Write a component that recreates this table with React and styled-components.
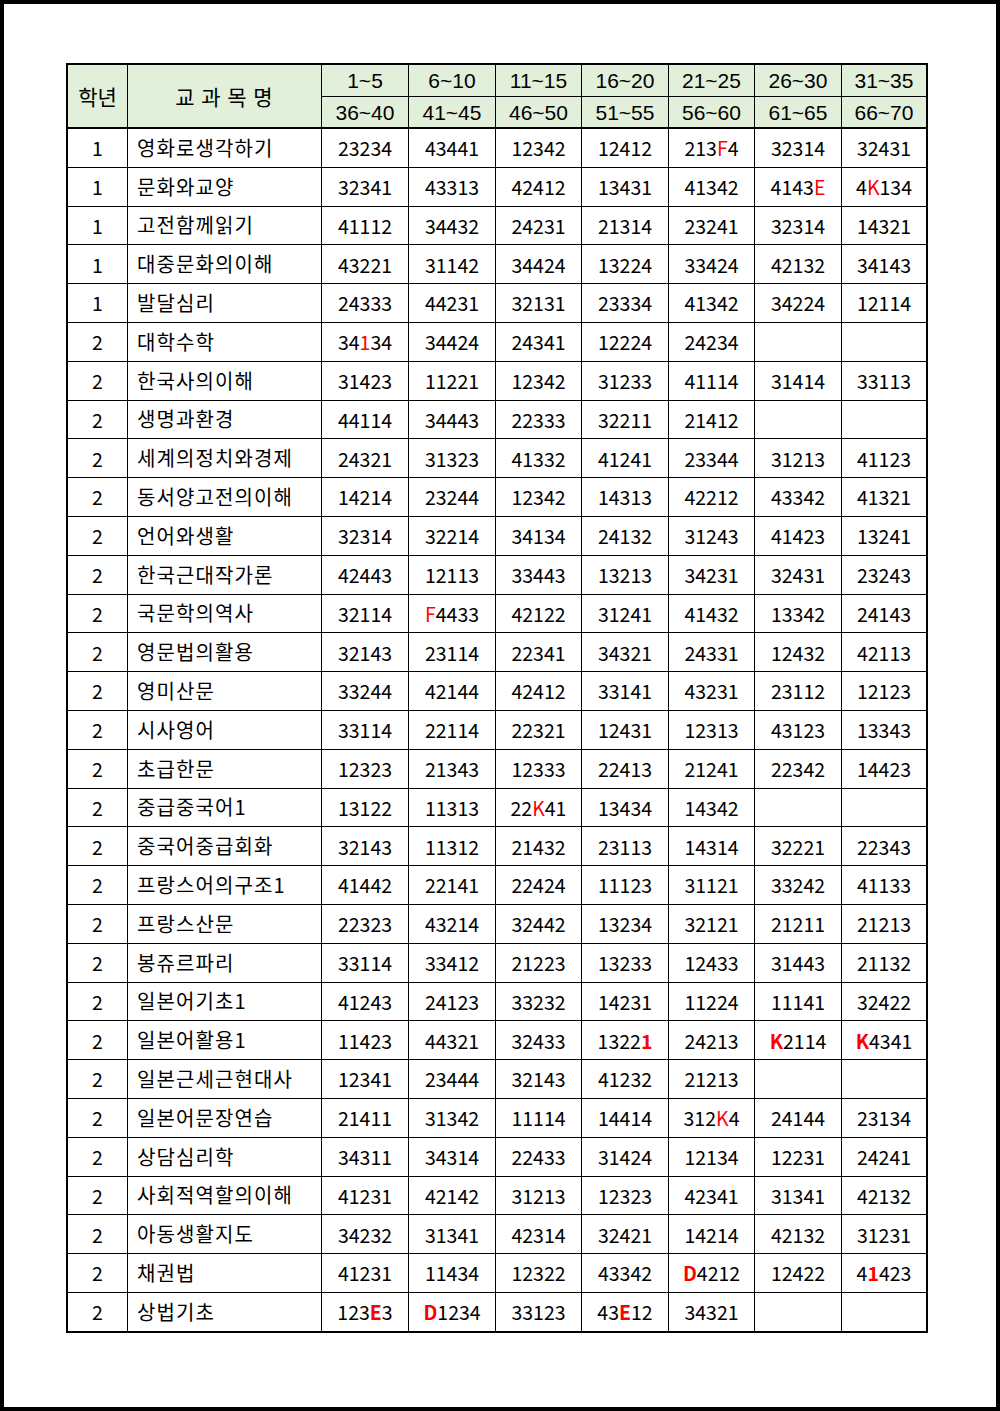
import React from "react";
import styled, { createGlobalStyle } from "styled-components";

const GlobalStyle = createGlobalStyle`
  html, body {
    margin: 0;
    padding: 0;
    background: #ffffff;
  }
  body {
    font-family: "Noto Sans CJK KR", "Noto Sans", sans-serif;
    color: #000;
  }
`;

const Page = styled.div`
  width: 1000px;
  height: 1411px;
  box-sizing: border-box;
  border: 4px solid #000;
  padding: 59px 0 0 62px;
  background: #fff;
`;

const Table = styled.table`
  border-collapse: separate;
  border-spacing: 0;
  table-layout: fixed;
  width: 861px;
  border: 2px solid #000;
`;

const HeadCell = styled.th`
  background: #e2efda;
  font-weight: 400;
  padding: 0;
  height: ${(p) => p.$h}px;
  border-right: ${(p) => (p.$last ? "none" : "1px solid #000")};
  border-bottom: ${(p) => (p.$thick ? "2px" : "1px")} solid #000;
  font-family: ${(p) =>
    p.$range ? '"Liberation Sans", Arial, sans-serif' : '"Noto Sans CJK KR", sans-serif'};
  font-size: ${(p) => (p.$range ? "21px" : "21px")};
  line-height: 1;
  text-align: center;
  vertical-align: middle;
  letter-spacing: ${(p) => (p.$wide ? "1px" : "0")};
`;

const Cell = styled.td`
  padding: ${(p) => (p.$name ? "0 0 0 9px" : "0")};
  height: 37.8px;
  border-right: ${(p) => (p.$last ? "none" : "1px solid #000")};
  border-bottom: ${(p) => (p.$bottom ? "none" : "1px solid #000")};
  font-size: ${(p) => (p.$name ? "20px" : "19.5px")};
  letter-spacing: ${(p) => (p.$name ? "1.1px" : "0")};
  line-height: 1.2;
  text-align: ${(p) => (p.$name ? "left" : "center")};
  vertical-align: middle;
  white-space: nowrap;
  overflow: hidden;
`;

const Mark = styled.span`
  color: #ff0000;
  font-weight: ${(p) => (p.$bold ? 700 : 400)};
`;

const widths = [60, 194, 87, 87, 86, 87, 86, 87, 84];

const top = ["1~5", "6~10", "11~15", "16~20", "21~25", "26~30", "31~35"];
const bottom = ["36~40", "41~45", "46~50", "51~55", "56~60", "61~65", "66~70"];

// {x} = red, [x] = bold red
const rows = [
  ["1", "영화로생각하기", "23234", "43441", "12342", "12412", "213{F}4", "32314", "32431"],
  ["1", "문화와교양", "32341", "43313", "42412", "13431", "41342", "4143{E}", "4{K}134"],
  ["1", "고전함께읽기", "41112", "34432", "24231", "21314", "23241", "32314", "14321"],
  ["1", "대중문화의이해", "43221", "31142", "34424", "13224", "33424", "42132", "34143"],
  ["1", "발달심리", "24333", "44231", "32131", "23334", "41342", "34224", "12114"],
  ["2", "대학수학", "34{1}34", "34424", "24341", "12224", "24234", "", ""],
  ["2", "한국사의이해", "31423", "11221", "12342", "31233", "41114", "31414", "33113"],
  ["2", "생명과환경", "44114", "34443", "22333", "32211", "21412", "", ""],
  ["2", "세계의정치와경제", "24321", "31323", "41332", "41241", "23344", "31213", "41123"],
  ["2", "동서양고전의이해", "14214", "23244", "12342", "14313", "42212", "43342", "41321"],
  ["2", "언어와생활", "32314", "32214", "34134", "24132", "31243", "41423", "13241"],
  ["2", "한국근대작가론", "42443", "12113", "33443", "13213", "34231", "32431", "23243"],
  ["2", "국문학의역사", "32114", "{F}4433", "42122", "31241", "41432", "13342", "24143"],
  ["2", "영문법의활용", "32143", "23114", "22341", "34321", "24331", "12432", "42113"],
  ["2", "영미산문", "33244", "42144", "42412", "33141", "43231", "23112", "12123"],
  ["2", "시사영어", "33114", "22114", "22321", "12431", "12313", "43123", "13343"],
  ["2", "초급한문", "12323", "21343", "12333", "22413", "21241", "22342", "14423"],
  ["2", "중급중국어1", "13122", "11313", "22{K}41", "13434", "14342", "", ""],
  ["2", "중국어중급회화", "32143", "11312", "21432", "23113", "14314", "32221", "22343"],
  ["2", "프랑스어의구조1", "41442", "22141", "22424", "11123", "31121", "33242", "41133"],
  ["2", "프랑스산문", "22323", "43214", "32442", "13234", "32121", "21211", "21213"],
  ["2", "봉쥬르파리", "33114", "33412", "21223", "13233", "12433", "31443", "21132"],
  ["2", "일본어기초1", "41243", "24123", "33232", "14231", "11224", "11141", "32422"],
  ["2", "일본어활용1", "11423", "44321", "32433", "1322[1]", "24213", "[K]2114", "[K]4341"],
  ["2", "일본근세근현대사", "12341", "23444", "32143", "41232", "21213", "", ""],
  ["2", "일본어문장연습", "21411", "31342", "11114", "14414", "312{K}4", "24144", "23134"],
  ["2", "상담심리학", "34311", "34314", "22433", "31424", "12134", "12231", "24241"],
  ["2", "사회적역할의이해", "41231", "42142", "31213", "12323", "42341", "31341", "42132"],
  ["2", "아동생활지도", "34232", "31341", "42314", "32421", "14214", "42132", "31231"],
  ["2", "채권법", "41231", "11434", "12322", "43342", "[D]4212", "12422", "4[1]423"],
  ["2", "상법기초", "123[E]3", "[D]1234", "33123", "43[E]12", "34321", "", ""],
];

const Rich = ({ text }) => {
  const parts = text.split(/(\{.\}|\[.\])/).filter(Boolean);
  return parts.map((p, i) => {
    if (p[0] === "{") return <Mark key={i}>{p[1]}</Mark>;
    if (p[0] === "[") return <Mark key={i} $bold>{p[1]}</Mark>;
    return <React.Fragment key={i}>{p}</React.Fragment>;
  });
};

export default function App() {
  return (
    <>
      <GlobalStyle />
      <Page>
        <Table>
          <colgroup>
            {widths.map((w, i) => (
              <col key={i} style={{ width: w }} />
            ))}
          </colgroup>
          <thead>
            <tr>
              <HeadCell rowSpan={2} $thick $h={62}>학년</HeadCell>
              <HeadCell rowSpan={2} $thick $wide $h={62}>교 과 목 명</HeadCell>
              {top.map((t, i) => (
                <HeadCell key={t} $range $h={31} $last={i === top.length - 1}>
                  {t}
                </HeadCell>
              ))}
            </tr>
            <tr>
              {bottom.map((t, i) => (
                <HeadCell key={t} $range $thick $h={30} $last={i === bottom.length - 1}>
                  {t}
                </HeadCell>
              ))}
            </tr>
          </thead>
          <tbody>
            {rows.map((r, ri) => (
              <tr key={ri}>
                {r.map((c, ci) => (
                  <Cell
                    key={ci}
                    $name={ci === 1}
                    $last={ci === r.length - 1}
                    $bottom={ri === rows.length - 1}
                  >
                    <Rich text={c} />
                  </Cell>
                ))}
              </tr>
            ))}
          </tbody>
        </Table>
      </Page>
    </>
  );
}
